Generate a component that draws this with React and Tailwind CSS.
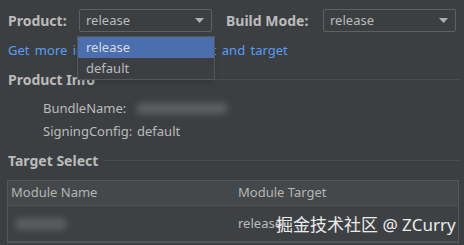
const Select = ({ value, width }) => {
  return (
    <div
      className={`${width} h-[23px] flex items-center justify-between border border-[#5e6163] rounded-[2px] bg-[#3c3f41] pl-[6px] pr-[7px]`}
    >
      <span className="text-[13px] text-[#bbbbbb]">{value}</span>
      <svg width="9" height="5" viewBox="0 0 9 5">
        <path d="M0 0 L9 0 L4.5 5 Z" fill="#aeb0b2" />
      </svg>
    </div>
  );
};

const Heading = ({ children }) => {
  return (
    <div className="flex items-center pl-[8px] pr-[4px]">
      <span className="text-[14px] font-bold text-[#bbbbbb] whitespace-nowrap">
        {children}
      </span>
      <div className="flex-1 h-px bg-[#4a4d4f] ml-[6px]" />
    </div>
  );
};

export default function App() {
  return (
    <div
      className="relative w-[464px] h-[245px] overflow-hidden bg-[#3c3f41] text-[#bbbbbb]"
      style={{ fontFamily: '"Noto Sans", "Noto Sans CJK SC", sans-serif' }}
    >
      <div className="flex items-center pt-[9px] pl-[8px]">
        <span className="w-[71px] text-[14px] font-bold">Product:</span>
        <Select value="release" width="w-[133px]" />
        <span className="ml-[14px] w-[97px] text-[14px] font-bold">Build Mode:</span>
        <Select value="release" width="w-[133px]" />
      </div>

      <div className="pl-[8px] mt-[6px] text-[13px] text-[#589df6] leading-[24px] [word-spacing:2px]">
        Get more info about the product and target
      </div>

      <div className="mt-[7px]">
        <Heading>Product Info</Heading>
      </div>

      <div className="pl-[43px] mt-[7px] text-[13px] leading-[23px]">
        <div className="flex items-center">
          <span className="w-[94px]">BundleName:</span>
          <span className="h-[11px] w-[90px] rounded-sm bg-[#5d6062] blur-[3px]" />
        </div>
        <div className="flex items-center">
          <span className="w-[94px]">SigningConfig:</span>
          <span>default</span>
        </div>
      </div>

      <div className="mt-[7px]">
        <Heading>Target Select</Heading>
      </div>

      <div className="mt-[9px] ml-[7px] w-[452px] border border-[#55585a] bg-[#3e4143]">
        <div className="flex h-[25px] items-center bg-[#45484a] border-b border-[#4d5052] text-[13px] text-[#b5b5b5]">
          <span className="w-[230px] pl-[3px]">Module Name</span>
          <span>Module Target</span>
        </div>
        <div className="flex h-[36px] items-center text-[13px] border-b border-[#4d5052]">
          <div className="w-[230px] pl-[8px]">
            <span className="block h-[12px] w-[50px] rounded-sm bg-[#5a5d5f] blur-[3px]" />
          </div>
          <span>release</span>
        </div>
      </div>

      <div className="absolute left-[77px] top-[36px] w-[138px] border border-[#555759] bg-[#3c3f41] text-[13px] shadow-md">
        <div className="h-[21px] flex items-center pl-[8px] bg-[#4b6eaf] text-[#d6dbe6]">release</div>
        <div className="h-[21px] flex items-center pl-[8px] text-[#bbbbbb]">default</div>
      </div>

      <div className="absolute left-[276px] top-[213px] text-[17px] text-[#ececec] leading-[24px] whitespace-nowrap">
        掘金技术社区 @ ZCurry
      </div>
    </div>
  );
}
